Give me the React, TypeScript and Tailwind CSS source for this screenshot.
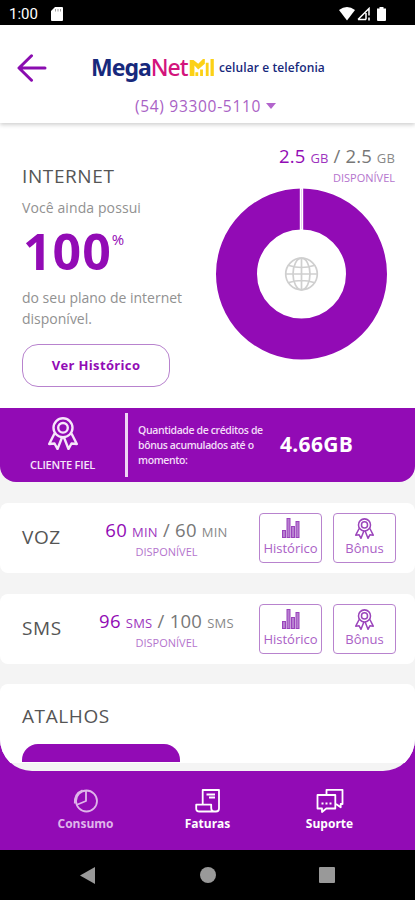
import type { ReactNode } from 'react';

interface IconProps {
  className?: string;
}

interface UsageCardProps {
  title: string;
  available: string;
  total: string;
  unit: string;
}

function BackArrow() {
  return (
    <svg viewBox="0 0 30 28" className="w-[30px] h-[28px]" fill="none" stroke="#8a0cb0" strokeWidth="3" strokeLinecap="round" strokeLinejoin="round">
      <path d="M28 14H2.5M14.5 1.8 2 14l12.5 12.2" />
    </svg>
  );
}

function Medal({ className }: IconProps) {
  return (
    <svg viewBox="0 0 30 33" className={className} fill="none" stroke="currentColor" strokeWidth="2.4" strokeLinejoin="round">
      <circle cx="15" cy="10.8" r="9.5" />
      <circle cx="15" cy="10.8" r="4.8" />
      <path d="M6.500 16.5 1.2 27l5.3-.5L9.5 32 14 20.5M23.5 16.5 28.8 27l-5.3-.5-3 5.5L16 20.5" />
    </svg>
  );
}

function Bars({ className }: IconProps) {
  return (
    <svg viewBox="0 0 18 20" className={className} fill="#b77fd0" stroke="#9a44bc" strokeWidth="1">
      <rect x=".5" y="12.5" width="3" height="7" />
      <rect x="5" y=".5" width="3" height="19" />
      <rect x="9.5" y="8.5" width="3" height="11" />
      <rect x="14" y="3.5" width="3" height="16" />
    </svg>
  );
}

function Donut() {
  return (
    <svg viewBox="0 0 172 172" className="w-[172px] h-[172px]" fill="none">
      <circle cx="85.5" cy="86" r="65" stroke="#920bb5" strokeWidth="41" />
      <path d="M85.5 0v42" stroke="#fff" strokeWidth="3.4" />
      <path d="M85.5 1v40" stroke="#e3c3ee" strokeWidth=".8" />
      <g stroke="#cfcfcf" strokeWidth="1.7">
        <circle cx="85.5" cy="86" r="15.8" />
        <ellipse cx="85.5" cy="86" rx="8.5" ry="15.8" />
        <path d="M85.5 70v32M69.500 86h32M73 77.500q12.500 4 25 0M73 94.500q12.500-4 25 0" />
      </g>
    </svg>
  );
}

function SectionTitle({ children }: { children: ReactNode }) {
  return <h2 className="text-[19px] leading-6 font-medium tracking-[0.6px] text-[#555]">{children}</h2>;
}

function UsageCard({ title, available, total, unit }: UsageCardProps) {
  return (
    <section className="h-[70px] shrink-0 bg-white rounded-lg flex pl-[22px] pr-[19px]">
      <div className="w-[65px] pt-[22px]">
        <SectionTitle>{title}</SectionTitle>
      </div>
      <div className="w-[159px] flex flex-col items-center pt-[15px]">
        <p className="text-[18.5px] leading-6 tracking-[0.25px] text-[#777] whitespace-nowrap">
          <span className="text-[#920bb5] font-medium">{available}</span>{' '}
          <span className="text-[#9d35be] text-[13px]">{unit}</span> / {total}{' '}
          <span className="text-[13px] text-[#888]">{unit}</span>
        </p>
        <p className="text-[11px] leading-[15px] text-[#b474cd]">DISPONÍVEL</p>
      </div>
      <div className="ml-auto flex gap-[11px] pt-[10px] text-[#9b45bb]">
        <button className="w-[63px] h-[50px] border border-[#b883ce] rounded-[4px] flex flex-col items-center pt-[4px]">
          <Bars className="w-[18px] h-[20px] shrink-0" />
          <span className="text-[13px] leading-[20px] text-[#aa60c6]">Histórico</span>
        </button>
        <button className="w-[63px] h-[50px] border border-[#b883ce] rounded-[4px] flex flex-col items-center pt-[4px]">
          <Medal className="w-[19px] h-[21px] shrink-0" />
          <span className="text-[13px] leading-[18px] text-[#aa60c6]">Bônus</span>
        </button>
      </div>
    </section>
  );
}

function NavItem({ label, muted, children }: { label: string; muted?: boolean; children: ReactNode }) {
  return (
    <button className={`w-[122px] flex flex-col items-center ${muted ? 'text-[#dfb5ea]' : 'text-white'}`}>
      <svg viewBox="0 0 28 25" className="w-[28px] h-[25px]" fill="none" stroke="currentColor" strokeWidth="1.8" strokeLinejoin="round">
        {children}
      </svg>
      <span className="text-[12px] leading-[18px] mt-[2px] font-bold">{label}</span>
    </button>
  );
}

export default function App() {
  return (
    <div className="w-[415px] h-[900px] flex flex-col overflow-hidden bg-black font-['Open_Sans',sans-serif]">
      {/* Status bar */}
      <div className="h-[25px] shrink-0 flex items-center text-white pl-[9px] pr-[28px] pt-[2px] font-['Roboto',sans-serif]">
        <span className="text-[15px] leading-5 w-[42px]">1:00</span>
        <svg viewBox="0 0 12 14" className="w-[12px] h-[14px]" fill="#fff">
          <path d="M4 0h7q1 0 1 1v12q0 1-1 1H1q-1 0-1-1V4z" />
          <path d="M4.5 2v2.5M7 2v2.5M9.5 2v2.5" stroke="#888" strokeWidth=".8" />
        </svg>
        <svg viewBox="0 0 48 14" className="ml-auto w-[48px] h-[14px]" fill="#fff">
          <path d="M0 3q8-6 16 0L8 13.5z" />
          <path d="M19 12.5 30 1.5v7M19 12.5h8M27 6v6.5" fill="none" stroke="#fff" strokeWidth="1.5" />
          <path d="M29.2 10.5h1.6v3h-1.6z" />
          <path d="M38 1.5h2.5V0h4v1.5H47V13q0 1-1 1h-7q-1 0-1-1z" />
        </svg>
      </div>

      {/* Header */}
      <header className="relative z-10 h-[98px] shrink-0 bg-white shadow-[0_2px_4px_rgba(0,0,0,0.18)]">
        <div className="flex items-center h-[61px] pt-[25px] pl-[17px]">
          <BackArrow />
          <div className="flex items-center ml-[44px] text-[#17297c]">
            <span className="w-[98px] -mt-[3px] text-[23px] leading-7 font-bold tracking-[-1px] font-['Noto_Sans',sans-serif] whitespace-nowrap">
              Mega<span className="font-medium text-[#d3147c]">Net</span>
            </span>
            <svg viewBox="0 0 26 18" className="w-[26px] h-[17px] -mt-[2px]" fill="#fcd116">
              <path d="M0 18V1h4l5 4 5-5h2v5l-7 6-4-4v11zM6 14h3v4H6zM11 11h3v7h-3zM17 4h3v14h-3zM22 0h3.500v18H22z" />
            </svg>
            <span className="text-[12px] leading-5 font-semibold tracking-[0.1px] ml-[4px] whitespace-nowrap">celular e telefonia</span>
          </div>
        </div>
        <div className="flex items-center justify-center h-[39px] pr-[4px] gap-[5px] text-[#a962c5]">
          <span className="text-[15.5px] leading-5 tracking-[0.7px]">(54) 93300-5110</span>
          <svg viewBox="0 0 10 6" className="w-[10px] h-[6px]" fill="#b264cc">
            <path d="M0 0h10L5 6z" />
          </svg>
        </div>
      </header>

      <div className="bg-[#920bb5] h-[727px] shrink-0 flex flex-col">
        <main className="h-[648px] shrink-0 bg-[#f4f4f4] rounded-b-[32px] overflow-hidden flex flex-col">
          <section className="h-[285px] shrink-0 bg-white flex">
            <div className="w-[215px] pl-[22px] pt-[41px] text-[14px] text-[#919191]">
              <SectionTitle>INTERNET</SectionTitle>
              <p className="mt-[10px] leading-5 tracking-[0.1px]">Você ainda possui</p>
              <p className="flex h-[52px] mt-[7px] ml-[1px] text-[#920bb5] font-bold">
                <span className="text-[50px] leading-[53px] tracking-[1px]">100</span>
                <span className="text-[15px] leading-[28px] font-medium">%</span>
              </p>
              <p className="mt-[11px] leading-[20.5px] whitespace-nowrap">
                do seu plano de internet
                <br />
                disponível.
              </p>
              <button className="mt-[15px] w-[148px] h-[43px] rounded-[16px] border border-[#b883ce] text-[#920bb5] text-[13px] tracking-[0.35px] font-bold">
                Ver Histórico
              </button>
            </div>
            <div className="w-[180px] flex flex-col items-end pt-[21px]">
              <p className="text-[18.5px] leading-6 tracking-[0.15px] text-[#777] whitespace-nowrap">
                <span className="text-[#920bb5] font-medium">2.5</span>{' '}
                <span className="text-[#9d35be] text-[13px]">GB</span> / 2.5{' '}
                <span className="text-[13px] text-[#888]">GB</span>
              </p>
              <p className="text-[11px] leading-[15px] text-[#b474cd]">DISPONÍVEL</p>
              <div className="mr-[7px] mt-[3px]">
                <Donut />
              </div>
            </div>
          </section>

          <section className="h-[74px] shrink-0 bg-[#920bb5] rounded-b-[16px] flex text-white">
            <div className="w-[125px] flex flex-col items-center pt-[9px] text-[#f6e6fa]">
              <Medal className="w-[30px] h-[33px]" />
              <span className="text-[11px] leading-4 mt-[7px] font-semibold tracking-[-0.2px]">CLIENTE FIEL</span>
            </div>
            <div className="w-[3px] h-[64px] mt-[5px] bg-[#eed5f4]" />
            <p className="w-[142px] pl-[10px] pt-[15px] text-[10.5px] leading-[15px] font-semibold tracking-[-0.38px] text-[#f3ddf8] whitespace-nowrap">
              Quantidade de créditos de
              <br />
              bônus acumulados até o
              <br />
              momento:
            </p>
            <span className="pl-[10px] text-[21px] leading-[73px] font-bold tracking-[0.3px]">4.66GB</span>
          </section>

          <div className="flex flex-col pt-[21px]">
            <UsageCard title="VOZ" available="60" total="60" unit="MIN" />
            <div className="h-[21px]" />
            <UsageCard title="SMS" available="96" total="100" unit="SMS" />
            <section className="mt-[20px] h-[79px] bg-white rounded-t-lg px-[22px] pt-[20px]">
              <SectionTitle>ATALHOS</SectionTitle>
              <div className="mt-[16px] h-[18px] w-[158px] rounded-t-[16px] bg-[#920bb5]" />
            </section>
          </div>
        </main>

        <nav className="flex justify-center pt-[17px] h-[79px]">
          <NavItem label="Consumo" muted>
            <circle cx="14.5" cy="13" r="10.5" />
            <path d="M14 2v11L4.3 17M10.5 2.3Q2.2 5.5 2.8 15.5" />
          </NavItem>
          <NavItem label="Faturas">
            <path d="M8.7 16.5V2H25v18.5q0 3-3 3H5.5q-3.3 0-3.3-3v-3.8h15v3.3q0 3.5 4 3.5M12.5 6.500H21M15 9.500h6" />
          </NavItem>
          <NavItem label="Suporte">
            <path d="M10.5 7V1.8h16V16h-1.8v3.3L20 16" />
            <path d="M1.500 7h17.800v13.500h-9L6 24v-3.500H1.500z" />
            <path d="M5.5 15.5h2M9.5 15.5h2M13.5 15.5h2" />
          </NavItem>
        </nav>
      </div>

      {/* Android buttons */}
      <div className="h-[50px] shrink-0 flex items-center pl-[80px] text-[#999]">
        <svg viewBox="0 0 15 17" className="w-[15px] h-[17px]" fill="currentColor">
          <path d="M0 8.5 15 0v17z" />
        </svg>
        <span className="ml-[105px] size-4 rounded-full bg-[#999]" />
        <span className="ml-[103px] size-4 rounded-[1px] bg-[#999]" />
      </div>
    </div>
  );
}
